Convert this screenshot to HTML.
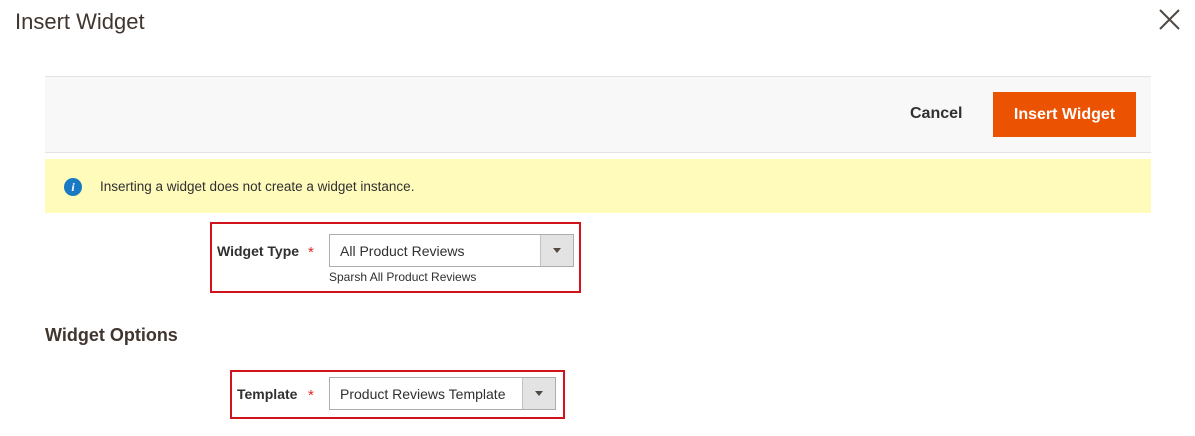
<!DOCTYPE html>
<html><head><style>
*{margin:0;padding:0;box-sizing:border-box}
body{width:1195px;height:436px;background:#fff;font-family:"Liberation Sans",sans-serif;color:#303030;position:relative;overflow:hidden}
.a{position:absolute;white-space:nowrap}
.sel{position:absolute;border:1px solid #adadad;background:#fff;font-size:14px;color:#303030}
.sel span{position:absolute;left:10px;top:8px}
.arr{position:absolute;right:0;top:0;bottom:0;width:33px;background:#e3e3e3;border-left:1px solid #c2c2c2}
.arr:after{content:"";position:absolute;left:12px;top:13px;border-left:4px solid transparent;border-right:4px solid transparent;border-top:5px solid #514943}
.red{position:absolute;border:2px solid #d1141c}
.lbl{font-size:14px;font-weight:bold;color:#303030}
.ast{color:#e22626;font-size:15px}
</style></head><body>
<div class="a" style="left:15px;top:9px;font-size:22px;color:#41362f">Insert Widget</div>
<svg class="a" style="left:1159px;top:9px" width="21" height="21" viewBox="0 0 21 21"><path d="M1 1L20 20M20 1L1 20" stroke="#514943" stroke-width="2"/></svg>
<div class="a" style="left:45px;top:76px;width:1106px;height:77px;background:#f8f8f8;border-top:1px solid #e3e3e3;border-bottom:1px solid #e3e3e3"></div>
<div class="a" style="left:910px;top:105px;font-size:16px;font-weight:bold;color:#303030">Cancel</div>
<div class="a" style="left:993px;top:92px;width:143px;height:45px;background:#eb5202;color:#fff;font-size:16px;font-weight:bold;text-align:center;line-height:45px">Insert Widget</div>
<div class="a" style="left:45px;top:159px;width:1106px;height:54px;background:#fffbbb"></div>
<div class="a" style="left:64px;top:178px;width:18px;height:18px;border-radius:50%;background:#1979c3;color:#fff;font-size:12px;font-weight:bold;font-style:italic;text-align:center;line-height:18px;font-family:'Liberation Serif',serif">i</div>
<div class="a" style="left:100px;top:179px;font-size:13.5px;color:#303030">Inserting a widget does not create a widget instance.</div>
<div class="red" style="left:210px;top:222px;width:371px;height:71px"></div>
<div class="a lbl" style="left:217px;top:243px">Widget Type</div>
<div class="a ast" style="left:308px;top:244px">*</div>
<div class="sel" style="left:329px;top:234px;width:245px;height:33px"><span>All Product Reviews</span><div class="arr"></div></div>
<div class="a" style="left:329px;top:270px;font-size:12px;color:#303030">Sparsh All Product Reviews</div>
<div class="a" style="left:45px;top:325px;font-size:18px;font-weight:bold;color:#41362f">Widget Options</div>
<div class="red" style="left:230px;top:370px;width:335px;height:49px"></div>
<div class="a lbl" style="left:237px;top:386px">Template</div>
<div class="a ast" style="left:308px;top:387px">*</div>
<div class="sel" style="left:329px;top:377px;width:227px;height:33px"><span>Product Reviews Template</span><div class="arr"></div></div>
</body></html>
